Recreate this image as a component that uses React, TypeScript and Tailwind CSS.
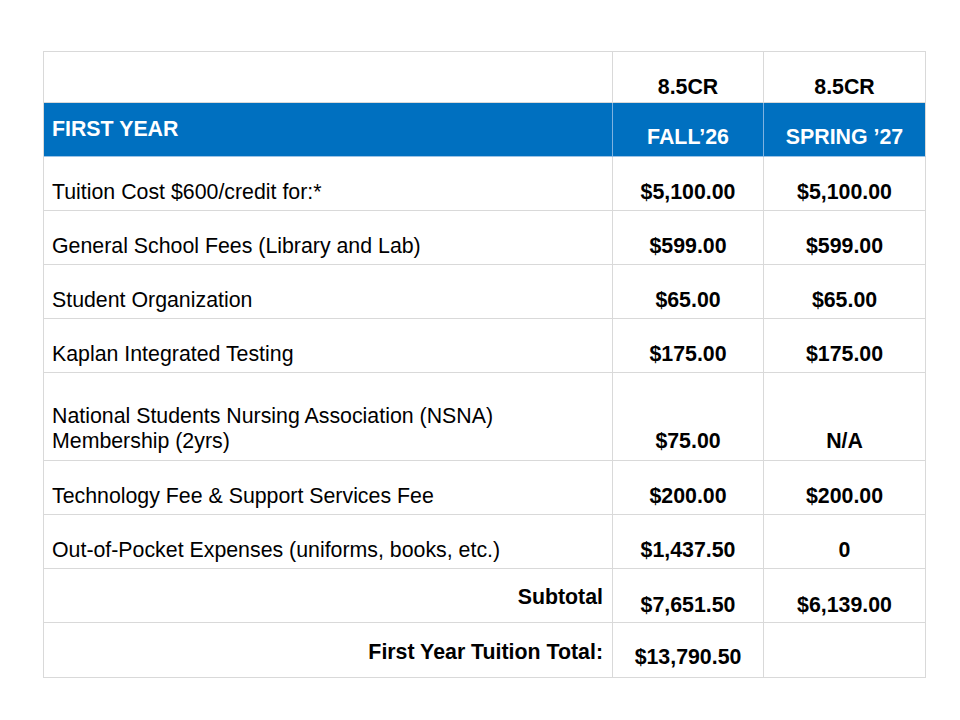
import React from "react";

type Row = {
  label: React.ReactNode;
  a: string;
  b: string;
  h: string;
  lp?: string;
  vp?: string;
};

const rows: Row[] = [
  { label: "Tuition Cost $600/credit for:*", a: "$5,100.00", b: "$5,100.00", h: "h-[54px]" },
  { label: "General School Fees (Library and Lab)", a: "$599.00", b: "$599.00", h: "h-[54px]" },
  { label: "Student Organization", a: "$65.00", b: "$65.00", h: "h-[54px]" },
  { label: "Kaplan Integrated Testing", a: "$175.00", b: "$175.00", h: "h-[54px]" },
  {
    label: (
      <>
        National Students Nursing Association (NSNA)
        <br />
        Membership (2yrs)
      </>
    ),
    a: "$75.00",
    b: "N/A",
    h: "h-[88px]",
    lp: "pb-[7px]",
    vp: "pb-[7px]",
  },
  { label: "Technology Fee & Support Services Fee", a: "$200.00", b: "$200.00", h: "h-[54px]" },
  { label: "Out-of-Pocket Expenses (uniforms, books, etc.)", a: "$1,437.50", b: "0", h: "h-[54px]" },
];

export default function App() {
  return (
    <div
      className="w-[960px] h-[720px] bg-white pt-[51px] pl-[43px] text-black"
      style={{ fontFamily: '"Liberation Sans", Arial, sans-serif' }}
    >
      <div className="grid grid-cols-[569px_151px_162px] w-[883px] border-t border-l border-[#d9d9d9] text-[21.33px] leading-[24.5px]">
        {/* header row */}
        <div className="h-[51px] border-r border-b border-[#d9d9d9]" />
        <div className="h-[51px] border-r border-b border-[#d9d9d9] flex items-end justify-center pb-[3px] font-bold">
          8.5CR
        </div>
        <div className="h-[51px] border-r border-b border-[#d9d9d9] flex items-end justify-center pb-[3px] font-bold">
          8.5CR
        </div>

        {/* blue row */}
        <div className="h-[54px] bg-[#0070c0] border-r border-b border-r-[#7fb2e0] border-b-[#9cc3e6] flex items-center pl-[8px] font-bold text-white">
          FIRST YEAR
        </div>
        <div className="h-[54px] bg-[#0070c0] border-r border-b border-r-[#7fb2e0] border-b-[#9cc3e6] flex items-end justify-center pb-[7px] font-bold text-white">
          FALL’26
        </div>
        <div className="h-[54px] bg-[#0070c0] border-r border-b border-r-[#d9d9d9] border-b-[#9cc3e6] flex items-end justify-center pb-[7px] font-bold text-white">
          SPRING ’27
        </div>

        {rows.map((r, i) => (
          <React.Fragment key={i}>
            <div className={`${r.h} border-r border-b border-[#d9d9d9] flex items-end pl-[8px] ${r.lp ?? "pb-[6px]"}`}>
              <span>{r.label}</span>
            </div>
            <div className={`${r.h} border-r border-b border-[#d9d9d9] flex items-end justify-center font-bold ${r.vp ?? "pb-[6px]"}`}>
              {r.a}
            </div>
            <div className={`${r.h} border-r border-b border-[#d9d9d9] flex items-end justify-center font-bold ${r.vp ?? "pb-[6px]"}`}>
              {r.b}
            </div>
          </React.Fragment>
        ))}

        {/* subtotal */}
        <div className="h-[54px] border-r border-b border-[#d9d9d9] flex items-end justify-end pr-[9px] pb-[13px] font-bold">
          Subtotal
        </div>
        <div className="h-[54px] border-r border-b border-[#d9d9d9] flex items-end justify-center pb-[5px] font-bold">
          $7,651.50
        </div>
        <div className="h-[54px] border-r border-b border-[#d9d9d9] flex items-end justify-center pb-[5px] font-bold">
          $6,139.00
        </div>

        {/* total */}
        <div className="h-[55px] border-r border-b border-[#d9d9d9] flex items-end justify-end pr-[9px] pb-[13px] font-bold">
          First Year Tuition Total:
        </div>
        <div className="h-[55px] border-r border-b border-[#d9d9d9] flex items-end justify-center pb-[8px] font-bold">
          $13,790.50
        </div>
        <div className="h-[55px] border-r border-b border-[#d9d9d9]" />
      </div>
    </div>
  );
}
